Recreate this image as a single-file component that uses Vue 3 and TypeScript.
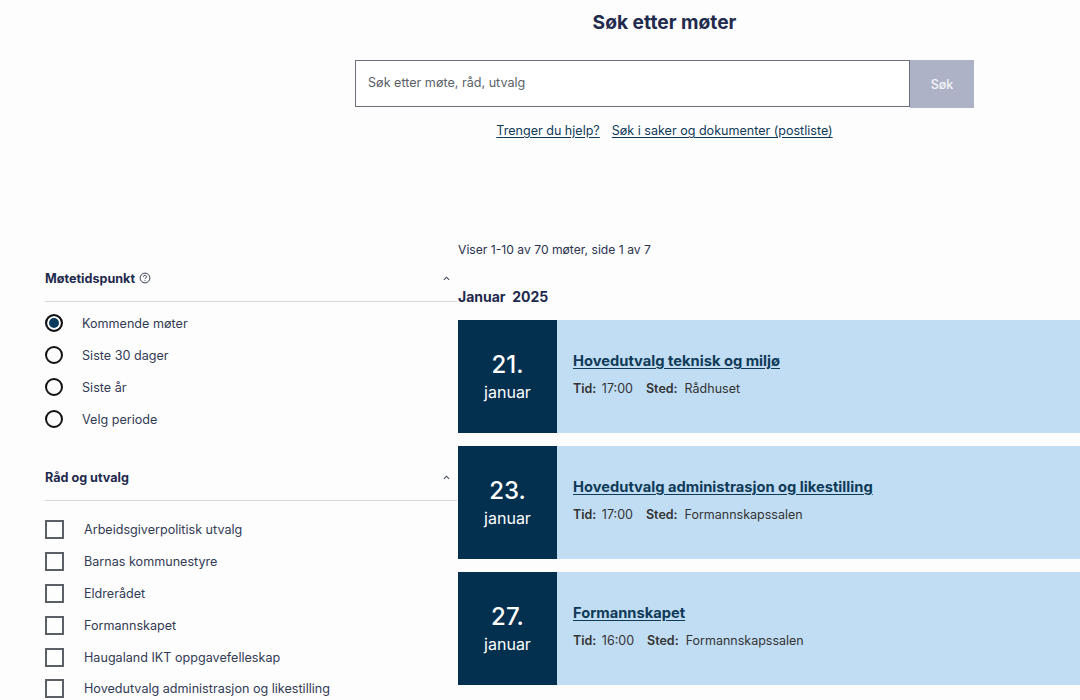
<script setup lang="ts">
interface Meeting {
  day: string
  title: string
  time: string
  place: string
}

const periods = ['Kommende møter', 'Siste 30 dager', 'Siste år', 'Velg periode']

const councils = [
  'Arbeidsgiverpolitisk utvalg',
  'Barnas kommunestyre',
  'Eldrerådet',
  'Formannskapet',
  'Haugaland IKT oppgavefelleskap',
  'Hovedutvalg administrasjon og likestilling',
]

const meetings: Meeting[] = [
  { day: '21.', title: 'Hovedutvalg teknisk og miljø', time: '17:00', place: 'Rådhuset' },
  { day: '23.', title: 'Hovedutvalg administrasjon og likestilling', time: '17:00', place: 'Formannskapssalen' },
  { day: '27.', title: 'Formannskapet', time: '16:00', place: 'Formannskapssalen' },
]
</script>

<template>
  <div class="page">
    <section class="search">
      <h1>Søk etter møter</h1>
      <form class="search-form" @submit.prevent>
        <input type="text" placeholder="Søk etter møte, råd, utvalg" />
        <button type="submit">Søk</button>
      </form>
      <div class="search-links">
        <a href="#">Trenger du hjelp?</a>
        <a href="#">Søk i saker og dokumenter (postliste)</a>
      </div>
    </section>

    <div class="columns">
      <aside class="filters">
        <div class="filter-head">
          <span class="filter-title">
            Møtetidspunkt
            <svg class="help" viewBox="0 0 12 12" width="12" height="12" fill="none" stroke="#3c4558">
              <circle cx="6" cy="6" r="4.9" />
              <path d="M4.5 4.8a1.5 1.5 0 1 1 2.3 1.2c-.5.3-.8.5-.8 1.1" />
              <path d="M6 8.2v.8" />
            </svg>
          </span>
          <svg class="chevron" viewBox="0 0 8 5" width="7" height="5" fill="none" stroke="#3c4558" stroke-width="1.2">
            <path d="M1 4l3-3 3 3" />
          </svg>
        </div>
        <ul class="radio-list">
          <li v-for="(p, i) in periods" :key="p">
            <span class="radio" :class="{ on: i === 0 }"></span>
            {{ p }}
          </li>
        </ul>

        <div class="filter-head second">
          <span class="filter-title">Råd og utvalg</span>
          <svg class="chevron" viewBox="0 0 8 5" width="7" height="5" fill="none" stroke="#3c4558" stroke-width="1.2">
            <path d="M1 4l3-3 3 3" />
          </svg>
        </div>
        <ul class="check-list">
          <li v-for="c in councils" :key="c">
            <span class="check"></span>
            {{ c }}
          </li>
        </ul>
      </aside>

      <main class="results">
        <p class="count">Viser 1-10 av 70 møter, side 1 av 7</p>
        <h2>Januar&nbsp; 2025</h2>
        <article v-for="m in meetings" :key="m.day" class="meeting">
          <div class="date">
            <span class="day">{{ m.day }}</span>
            <span class="month">januar</span>
          </div>
          <div class="info">
            <a href="#" class="title">{{ m.title }}</a>
            <p class="meta">
              <b>Tid:</b> {{ m.time }}
              <b class="place">Sted:</b> {{ m.place }}
            </p>
          </div>
        </article>
      </main>
    </div>
  </div>
</template>

<style>
body {
  margin: 0;
  background: #fdfdfd;
}
</style>

<style scoped>
.page {
  height: 700px;
  overflow: hidden;
  font-family: Inter, "Liberation Sans", sans-serif;
  color: #2b3350;
}

.search {
  width: 619px;
  margin-left: 355px;
  padding-top: 10px;
  text-align: center;
}

h1 {
  margin: 0 0 26px;
  font-size: 19.2px;
  line-height: 24px;
  font-weight: 700;
  color: #1f2a4d;
}

.search-form {
  display: flex;
  align-items: flex-start;
  height: 48px;
}

.search-form input {
  flex: 1;
  box-sizing: border-box;
  height: 47px;
  padding: 0 12px 2px;
  border: 1px solid #6d7078;
  border-radius: 0;
  background: #fff;
  font: 12.6px Inter, "Liberation Sans", sans-serif;
  outline: none;
}

.search-form input::placeholder {
  color: #5a5f68;
  opacity: 1;
}

.search-form button {
  width: 64px;
  height: 48px;
  border: none;
  background: #adb2c7;
  color: #f4f5f8;
  font: 500 12.5px Inter, "Liberation Sans", sans-serif;
}

.search-links {
  display: flex;
  justify-content: center;
  gap: 12px;
  margin-top: 15px;
  font-size: 12.55px;
  line-height: 16px;
}

.search-links a {
  color: #0f3a58;
  text-underline-offset: 2px;
}

.columns {
  display: grid;
  grid-template-columns: 412px 1fr;
  gap: 1px;
  margin-top: 101px;
  padding-left: 45px;
}

.filters {
  padding-top: 26px;
}

.filter-head {
  display: flex;
  align-items: center;
  justify-content: space-between;
  height: 24px;
  padding: 0 7px 11px 0;
  border-bottom: 1px solid #d5d8df;
}

.filter-head.second {
  margin-top: 30px;
}

.filter-title {
  display: flex;
  align-items: center;
  gap: 4px;
  font-size: 12.6px;
  font-weight: 700;
  color: #1f2a4d;
}

ul {
  margin: 0;
  padding: 0;
  list-style: none;
  font-size: 12.6px;
  color: #333b55;
}

.radio-list {
  padding-top: 5px;
}

.radio-list li {
  display: flex;
  align-items: center;
  gap: 19px;
  height: 32px;
}

.radio {
  box-sizing: border-box;
  width: 18px;
  height: 18px;
  border: 2px solid #111;
  border-radius: 50%;
}

.radio.on {
  background: #0a3a5c;
  box-shadow: inset 0 0 0 2px #fff;
}

.check-list {
  padding-top: 13px;
}

.check-list li {
  display: flex;
  align-items: center;
  gap: 20px;
  height: 31.8px;
}

.check {
  box-sizing: border-box;
  width: 19px;
  height: 19px;
  border: 2px solid #5b5f66;
}

.count {
  margin: 0;
  padding-top: 2px;
  font-size: 12.15px;
  line-height: 16px;
  color: #2b3350;
}

h2 {
  margin: 29px 0 13px;
  font-size: 14px;
  line-height: 20px;
  font-weight: 700;
  color: #1f2a4d;
}

.meeting {
  display: flex;
  height: 113px;
  margin-bottom: 13px;
  background: #c0ddf3;
}

.date {
  display: flex;
  flex-direction: column;
  align-items: center;
  justify-content: center;
  width: 99px;
  background: #03304f;
  color: #fff;
}

.day {
  font-size: 24px;
  line-height: 30px;
  font-weight: 500;
}

.month {
  font-size: 16px;
  line-height: 24px;
}

.info {
  padding: 30px 16px 0;
}

.title {
  font-size: 14.7px;
  line-height: 22px;
  font-weight: 700;
  color: #0f3a58;
  text-underline-offset: 2px;
}

.meta {
  margin: 9px 0 0;
  font-size: 12.5px;
  line-height: 16px;
  color: #333;
}

.meta b {
  margin-right: 2px;
  font-weight: 600;
}

.meta .place {
  margin-left: 9.5px;
  margin-right: 3.5px;
}
</style>
